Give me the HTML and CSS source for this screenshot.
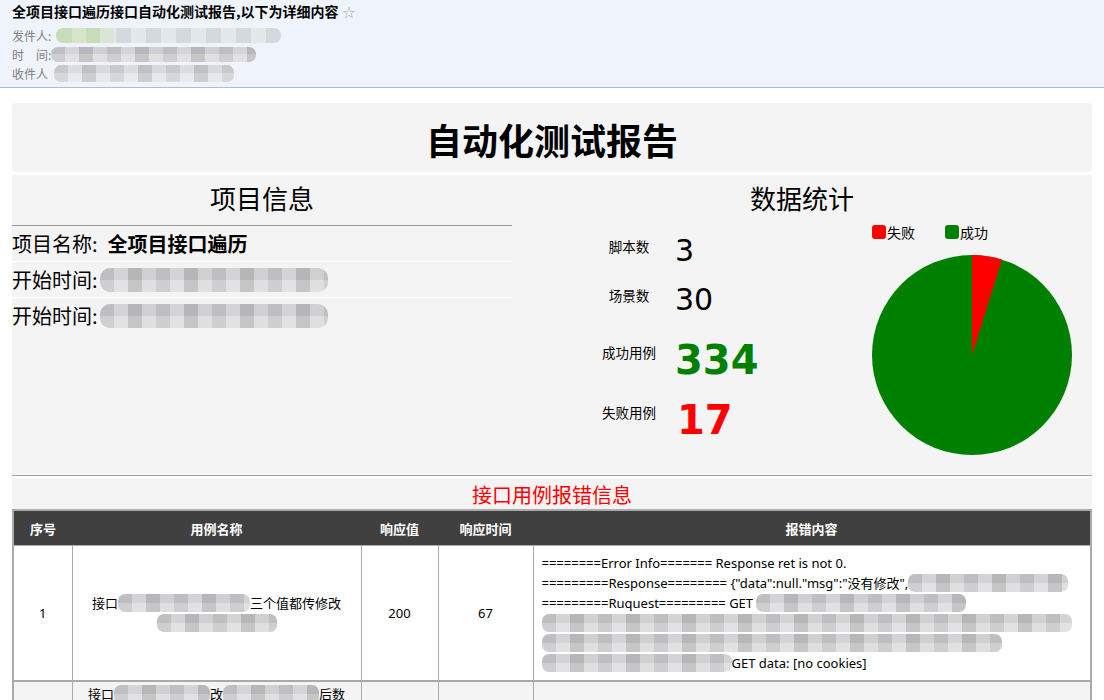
FILE: index.html
```html
<!DOCTYPE html>
<html lang="zh-CN">
<head>
<meta charset="utf-8">
<title>自动化测试报告</title>
<link rel="stylesheet" href="styles.css">
</head>
<body>
<div class="mail-head">
  <div class="mail-title">全项目接口遍历接口自动化测试报告,以下为详细内容 <span class="star">☆</span></div>
  <div class="mail-meta"><span class="lbl">发件人:</span><span class="blur blur-green w-mail1"></span></div>
  <div class="mail-meta"><span class="lbl">时　间:</span><span class="blur w-mail2"></span></div>
  <div class="mail-meta"><span class="lbl">收件人</span><span class="blur blur-light w-mail3"></span></div>
</div>

<div class="report">
  <div class="box title-box"><h1>自动化测试报告</h1></div>

  <div class="box summary">
    <section class="info">
      <h2>项目信息</h2>
      <div class="info-list">
        <div class="info-row">项目名称: <b>全项目接口遍历</b></div>
        <div class="info-row">开始时间:<span class="blur tall w-time"></span></div>
        <div class="info-row">开始时间:<span class="blur tall w-time"></span></div>
      </div>
    </section>
    <section class="stat">
      <h2>数据统计</h2>
      <div class="stat-body">
        <div class="stat-list">
          <div class="stat-row row-a"><span class="stat-label">脚本数</span><span class="stat-val">3</span></div>
          <div class="stat-row row-b"><span class="stat-label">场景数</span><span class="stat-val">30</span></div>
          <div class="stat-row row-c"><span class="stat-label">成功用例</span><span class="stat-val big ok">334</span></div>
          <div class="stat-row row-d"><span class="stat-label">失败用例</span><span class="stat-val big bad">17</span></div>
        </div>
        <div class="chart">
          <div class="legend">
            <span class="leg"><i class="sw sw-red"></i>失败</span>
            <span class="leg"><i class="sw sw-green"></i>成功</span>
          </div>
          <svg class="pie" width="200" height="200" viewBox="0 0 200 200">
            <circle cx="100" cy="100" r="100" fill="#008000"/>
            <path d="M100 100 L100 0 A100 100 0 0 1 129.97 4.6 Z" fill="#ff0000"/>
          </svg>
        </div>
      </div>
    </section>
  </div>

  <div class="box errors">
    <h3>接口用例报错信息</h3>
    <table class="err-table">
      <colgroup>
        <col class="c-no"><col class="c-name"><col class="c-code"><col class="c-time"><col class="c-msg">
      </colgroup>
      <thead>
        <tr><th>序号</th><th>用例名称</th><th>响应值</th><th>响应时间</th><th>报错内容</th></tr>
      </thead>
      <tbody>
        <tr class="r-white">
          <td>1</td>
          <td>接口<span class="blur w-n1"></span>三个值都传修改<br><span class="blur w-n2"></span></td>
          <td>200</td>
          <td>67</td>
          <td class="msg">========Error Info======= Response ret is not 0.<br>=========Response======== {"data":null."msg":"没有修改",<span class="blur w-m1"></span><br>=========Ruquest========= GET <span class="blur w-m2"></span><br><span class="blur w-m3"></span><br><span class="blur w-m4"></span><br><span class="blur w-m5"></span>GET data: [no cookies]</td>
        </tr>
        <tr class="r-grey">
          <td>2</td>
          <td class="name-top">接口<span class="blur w-n3"></span>改<span class="blur w-n4"></span>后数<br><span class="blur w-n5"></span><br><span class="blur w-n6"></span><br><span class="blur w-n5"></span><br><span class="blur w-n6"></span><br><span class="blur w-n5"></span><br><span class="blur w-n6"></span><br><span class="blur w-n2"></span></td>
          <td>200</td>
          <td>52</td>
          <td class="msg">========Error Info======= Response ret is not 0.<br>=========Response======== {"data":null."msg":"没有修改",<span class="blur w-m1"></span></td>
        </tr>
      </tbody>
    </table>
  </div>
</div>
</body>
</html>
```

FILE: styles.css
```css
html, body {
  margin: 0;
  padding: 0;
  background: #ffffff;
  font-family: "Noto Sans", "Noto Sans CJK SC", sans-serif;
  color: #000;
}

/* ---------- mail header ---------- */
.mail-head {
  background: #eef3fc;
  border-bottom: 1px solid #a9bed8;
  padding: 0 12px 4px;
  height: 83px;
  overflow: hidden;
}
.mail-title {
  font-family: "Noto Sans CJK SC", sans-serif;
  font-weight: bold;
  font-size: 14px;
  line-height: 22px;
  height: 22px;
}
.star {
  font-family: "DejaVu Sans", sans-serif;
  font-weight: normal;
  color: #aaaaaa;
  font-size: 16px;
  line-height: 16px;
  vertical-align: -1px;
}
.mail-title + .mail-meta { margin-top: 4px; }
.mail-meta {
  font-family: "Noto Sans CJK SC", sans-serif;
  font-size: 12px;
  line-height: 19px;
  color: #808080;
  display: flex;
  align-items: center;
}
.mail-meta .lbl { flex: none; }

/* ---------- blurred blocks ---------- */
.blur {
  display: inline-block;
  height: 15px;
  vertical-align: middle;
  border-radius: 7px;
  background-color: #d6d6d8;
  background-image:
    repeating-linear-gradient(90deg, rgba(0,0,0,0.06) 0 14px, rgba(255,255,255,0.18) 14px 28px, rgba(0,0,0,0.1) 28px 42px, rgba(255,255,255,0.1) 42px 56px),
    linear-gradient(180deg, rgba(0,0,0,0.05) 0 50%, rgba(255,255,255,0.15) 50% 100%);
}
.blur.tall { height: 24px; border-radius: 10px; }
.blur-green {
  background-color: #dde2e6;
  background-image:
    linear-gradient(90deg, #c9dcb9 0 16px, #d8e3cc 16px 30px, #c9dcb9 30px 44px, #dbe5d6 44px 58px, transparent 58px),
    repeating-linear-gradient(90deg, rgba(0,0,0,0.04) 0 15px, rgba(255,255,255,0.2) 15px 30px);
}
.blur-light { background-color: #dfe1e5; }

.w-mail1 { width: 225px; margin-left: 5px; }
.w-mail2 { width: 205px; margin-left: 0; }
.w-mail3 { width: 180px; margin-left: 6px; height: 17px; }
.w-time { width: 228px; margin-left: 2px; }
.w-n1 { width: 132px; }
.w-n2 { width: 120px; }
.w-n3 { width: 96px; }
.w-n4 { width: 96px; }
.w-n5 { width: 240px; }
.w-n6 { width: 200px; }
.w-m1 { width: 160px; }
.w-m2 { width: 210px; }
.w-m3 { width: 530px; }
.w-m4 { width: 460px; }
.w-m5 { width: 190px; }

/* ---------- report ---------- */
.report {
  margin: 15px 12px 0;
}
.box {
  background: #f4f4f4;
}
.title-box {
  height: 69px;
  border-radius: 3px;
}
.title-box h1 {
  margin: 0;
  text-align: center;
  font-family: "Noto Sans CJK SC", sans-serif;
  font-size: 36px;
  font-weight: bold;
  line-height: 72px;
}

.summary {
  margin-top: 3px;
  display: grid;
  grid-template-columns: 500px 580px;
  padding: 5px 0 19px;
  border-bottom: 1px solid #a0a0a0;
}
.summary h2 {
  margin: 0;
  text-align: center;
  font-family: "Noto Sans CJK SC", sans-serif;
  font-weight: normal;
  font-size: 26px;
  line-height: 36px;
}

.info-list {
  margin-top: 9px;
  border-top: 1px solid #999999;
}
.info-row {
  font-family: "Noto Sans CJK SC", sans-serif;
  font-size: 20px;
  height: 35px;
  line-height: 35px;
  display: flex;
  align-items: center;
  white-space: nowrap;
}
.info-row:not(:last-child) { border-bottom: 1px solid #ffffff; }
.info-row b { margin-left: 10px; }

.stat-body {
  display: flex;
}
.stat-list {
  width: 360px;
  padding-top: 17px;
  padding-left: 77px;
  box-sizing: border-box;
}
.stat-row {
  display: flex;
  align-items: flex-start;
}
.row-a { height: 49px; }
.row-b { height: 54px; }
.row-c { height: 60px; }
.row-d { height: 60px; }
.stat-label {
  width: 80px;
  text-align: center;
  font-family: "Noto Sans CJK SC", sans-serif;
  font-size: 13.5px;
  line-height: 20px;
  margin-top: 3px;
  flex: none;
}
.row-c .stat-label, .row-d .stat-label { margin-top: 6px; }
.stat-val {
  margin-left: 6px;
  font-family: "DejaVu Sans", sans-serif;
  font-size: 30px;
  line-height: 36px;
}
.stat-val.big {
  font-weight: bold;
  font-size: 40px;
  line-height: 48px;
}
.ok { color: #008000; }
.bad { color: #ff0000; margin-left: 8px; }

.chart {
  display: flex;
  flex-direction: column;
}
.legend {
  margin-top: 8px;
  height: 16px;
  display: flex;
  gap: 30px;
  font-family: "Noto Sans CJK SC", sans-serif;
  font-size: 14px;
  line-height: 16px;
}
.leg { display: flex; align-items: center; }
.sw {
  display: inline-block;
  width: 14px;
  height: 14px;
  border-radius: 3px;
  margin-right: 1px;
}
.sw-red { background: #ff0000; }
.sw-green { background: #008000; }
.pie { margin-top: 15px; display: block; }

/* ---------- errors ---------- */
.errors {
  margin-top: 2px;
}
.errors h3 {
  margin: 0;
  padding-top: 3px;
  text-align: center;
  color: #ff0000;
  font-family: "Noto Sans CJK SC", sans-serif;
  font-weight: normal;
  font-size: 20px;
  line-height: 28px;
}
.err-table {
  width: 100%;
  table-layout: fixed;
  border-collapse: collapse;
  border: 2px solid #aaaaaa;
  font-size: 13px;
  font-family: "Noto Sans", "Noto Sans CJK SC", sans-serif;
}
.c-no { width: 59px; }
.c-name { width: 289px; }
.c-code { width: 77px; }
.c-time { width: 95px; }
.c-msg { width: auto; }
.err-table th {
  background: #404040;
  color: #ffffff;
  font-family: "Noto Sans CJK SC", sans-serif;
  font-weight: bold;
  height: 34px;
  padding: 0;
  border: none;
}
.err-table td {
  border: 1px solid #aaaaaa;
  text-align: center;
  vertical-align: middle;
  padding: 7px 8px;
  line-height: 20px;
}
.err-table .blur {
  height: 18px;
  vertical-align: top;
  margin-top: 1px;
}
.err-table tbody tr { border-bottom: 2px solid #aaaaaa; }
.r-white { background: #ffffff; }
.r-grey { background: #f4f4f4; }
.err-table td.msg {
  text-align: left;
  white-space: nowrap;
  overflow: hidden;
}
.err-table td.name-top {
  vertical-align: top;
  padding-top: 2px;
}
```
